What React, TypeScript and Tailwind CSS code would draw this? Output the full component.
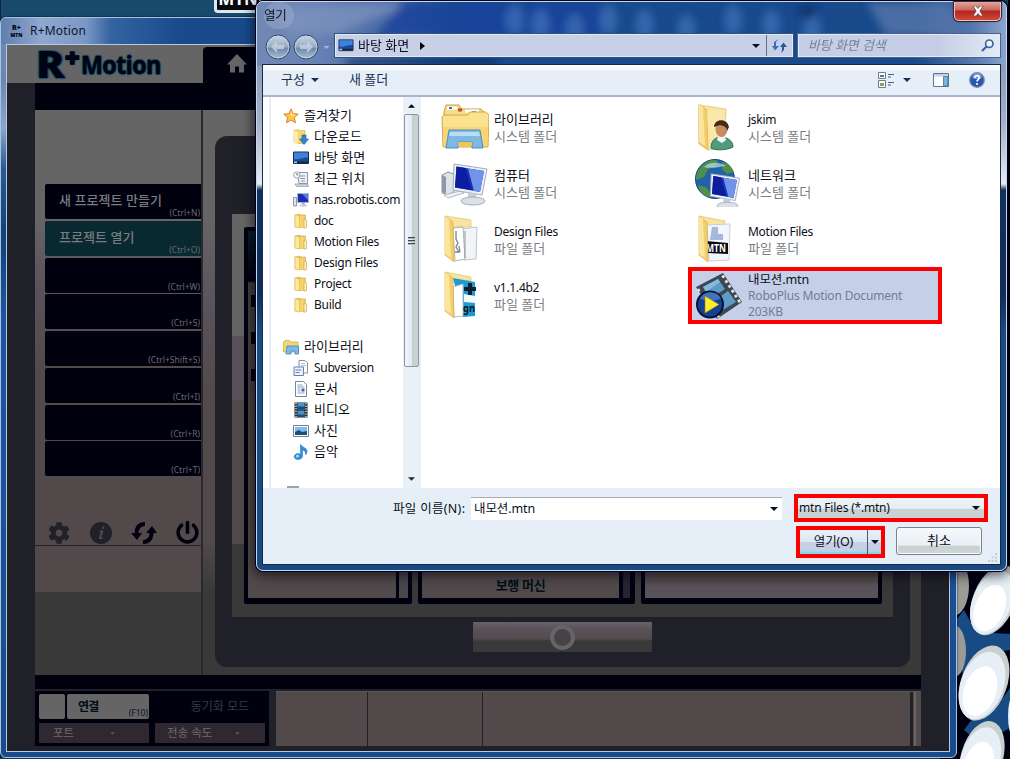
import React from 'react';
import { FaCog, FaPowerOff } from 'react-icons/fa';

type P = { className?: string };

const Caret = ({ className = '' }: P) => (
  <svg viewBox="0 0 8 4" className={`h-1 w-2 shrink-0 ${className}`} fill="currentColor">
    <path d="M0 0h8L4 4z" />
  </svg>
);

/* ---------- small navigation icons ---------- */

const SmallFolder = () => (
  <svg viewBox="0 0 16 16" className="h-4 w-4 shrink-0">
    <path d="M2 2l5-1 1 1h4.5v12.5H6L2 14z" fill="#e8c560" stroke="#d0ac48" strokeWidth=".6" />
    <path d="M2 1.700l4.500 1.600v12L2 13.600z" fill="#ffe898" stroke="#d8b04c" strokeWidth=".5" />
    <path d="M7 3h4.500v11.500H7z" fill="#f5d470" />
    <path d="M11 6l2.500 1v7.500l-2.500.8z" fill="#fff0b8" stroke="#c8a040" strokeWidth=".6" />
  </svg>
);
const Star = () => (
  <svg viewBox="0 0 16 16" className="h-4 w-4 shrink-0">
    <path d="M8 .8l2.1 4.9 5.2.4-4 3.5 1.2 5.2L8 12.1l-4.6 2.7 1.3-5.2-4-3.5 5.2-.4z" fill="#ffc34f" stroke="#e2842e" />
    <path d="M8 3l1.3 3.6 3.4.3L8 8z" fill="#fff0ab" />
  </svg>
);
const Download = () => (
  <svg viewBox="0 0 16 16" className="h-4 w-4 shrink-0">
    <path d="M1 1.5l5-1 1 1h5v13H5l-4-1z" fill="#f4d675" stroke="#d8b04c" strokeWidth=".6" />
    <path d="M1 1.7l4 1.5v12l-4-1.7z" fill="#ffebac" />
    <path d="M9 6h4v4h2.5L11 15.5 6.5 10H9z" fill="#2f86d0" stroke="#1b5c9c" strokeWidth=".6" />
  </svg>
);
const Desktop = ({ className = 'h-4 w-4' }: P) => (
  <svg viewBox="0 0 16 16" className={`shrink-0 ${className}`}>
    <path d="M.5 2h15v11.5H.5z" fill="#1b4b98" stroke="#1a2a52" />
    <path d="M1 2.5h14v5C10 7 6 10 1 9z" fill="#3d84d8" />
    <path d="M1 11.5h14v1.6H1z" fill="#1b2534" />
    <path d="M1 11.5h3v1.6H1z" fill="#9fd2e6" />
  </svg>
);
const Recent = () => (
  <svg viewBox="0 0 16 16" className="h-4 w-4 shrink-0">
    <path d="M4 1.5h10.5v11H6z" fill="#eef2f7" stroke="#8a94a5" />
    <path d="M7 5h5M7 7.5h5M8 10h4" stroke="#8795ab" />
    <circle cx="3.8" cy="4" r="3.2" fill="#f5f7fa" stroke="#8a94a5" strokeWidth=".8" />
    <path d="M3.8 2v2h1.6" stroke="#5b6880" strokeWidth=".8" fill="none" />
    <path d="M2 13h12.5l1 2.4H3.5z" fill="#d4dae3" stroke="#8a94a5" strokeWidth=".7" />
  </svg>
);
const NasPc = () => (
  <svg viewBox="0 0 16 16" className="h-4 w-4 shrink-0">
    <path d="M.5 5.5h3V14h-3z" fill="#e1e4ea" stroke="#7d8798" strokeWidth=".8" />
    <path d="M4.5 1.5h11v9h-11z" fill="#1c2fb4" stroke="#a9b3c5" />
    <path d="M9 2h6v6z" fill="#5b78e8" />
    <path d="M9 10.5h2.5l.5 2H8.5z" fill="#9aa4b4" />
    <ellipse cx="10.2" cy="13.6" rx="4" ry="1.1" fill="#c4cbd6" />
  </svg>
);
const SmallLibrary = () => (
  <svg viewBox="0 0 16 16" className="h-4 w-4 shrink-0">
    <path d="M.5 3L2 1.5h4.5L8 3h7v10H.5z" fill="#f4d675" stroke="#d2ac4a" strokeWidth=".8" />
    <path d="M4 7h11.5v8H12v-3H8v3H3z" fill="#79b9e6" stroke="#3f86c0" strokeWidth=".8" />
  </svg>
);
const Subversion = () => (
  <svg viewBox="0 0 16 16" className="h-4 w-4 shrink-0">
    <path d="M6 .5h6L14.5 3v10H6z" fill="#fff" stroke="#8393ad" />
    <path d="M8 3.5h4M8 5.5h5" stroke="#b3bfd0" />
    <path d="M1 7h9.5v8.5H1z" fill="#edf2fb" stroke="#6880ae" />
    <path d="M2.5 10h6M2.5 12.5h4" stroke="#6880ae" strokeWidth="1.2" />
  </svg>
);
const DocIcon = () => (
  <svg viewBox="0 0 16 16" className="h-4 w-4 shrink-0">
    <path d="M2.5.5h8l3 3v12h-11z" fill="#fff" stroke="#76879c" />
    <path d="M4.500 4h5M4.500 6h7M4.500 8h3M4.500 10h3M4.500 12h7" stroke="#8ba2bf" />
    <path d="M8.5 7.5h3v3h-3z" fill="#3b66a8" />
  </svg>
);
const Video = () => (
  <svg viewBox="0 0 16 16" className="h-4 w-4 shrink-0">
    <path d="M1.5.5h13v15h-13z" fill="#1c2430" />
    <path d="M4.5 1h7v6.6h-7zM4.5 8.6h7V15h-7z" fill="#4992cb" />
    <path d="M4.5 5c3-2 4 1 7-1v3.6h-7zM4.5 13c3-2 4 1 7-1v3h-7z" fill="#1d4f78" />
    <path d="M3 1v14M13 1v14" stroke="#dfe5ec" strokeWidth="1.4" strokeDasharray="1.3 1.3" />
  </svg>
);
const Photo = () => (
  <svg viewBox="0 0 16 16" className="h-4 w-4 shrink-0">
    <path d="M.5 2.5h15v11H.5z" fill="#fff" stroke="#6f7f93" />
    <path d="M2 4h12v8H2z" fill="#7cbdf0" />
    <path d="M2 9l4-2 3 2 5-1v4H2z" fill="#1f4c79" />
  </svg>
);
const Music = () => (
  <svg viewBox="0 0 16 16" className="h-4 w-4 shrink-0">
    <path d="M7.500.300c1 3 6 3.200 6.500 6.500.2 1.700-.5 3-1.500 4C13 8 11.500 6.500 9.500 6v6c0 2-2 3.500-4.500 3.500S1.200 14.200 1.200 12.600 3 9.600 5 9.600c1 0 1.800.3 2.500.7z" fill="#2b93dc" stroke="#1769ae" strokeWidth=".5" />
    <circle cx="4.500" cy="12.200" r="1.400" fill="#a6dcff" />
  </svg>
);

/* ---------- 48px file icons ---------- */

const BigLibrary = () => (
  <svg viewBox="0 0 48 48" className="h-12 w-12 shrink-0">
    <path d="M3 9L5 2h13l2 4h20l3 3v10H3z" fill="#f7dd8a" stroke="#c9a03c" />
    <path d="M6 5h10M24 8h14" stroke="#fff" strokeWidth="3" />
    <path d="M8 5h3" stroke="#3878b8" strokeWidth="2" />
    <path d="M17 7h4" stroke="#cc4a2c" strokeWidth="3" />
    <path d="M31 9.500h4" stroke="#3878b8" strokeWidth="2.500" />
    <path d="M1 14l2-2h24l2-3h16l3 3-1 32H2z" fill="#fbe28e" stroke="#d2a844" />
    <path d="M2 24h45l-1 19H3z" fill="#f6d572" />
    <path d="M8 27h31l3 18H31v-6H17v6H5z" fill="#7fb8e2" stroke="#4a8dc4" />
    <path d="M9 29h29l1 4H8z" fill="#b8ddf5" />
    <path d="M17 39h14v4H17z" fill="#f0c552" />
  </svg>
);
const Monitor = () => (
  <g>
    <path d="M13 1l33 5-5 26-29-5z" fill="#eef1f5" stroke="#a2abb8" />
    <path d="M15.500 3.500L43 8l-4 21-25-4.500z" fill="#1835b8" />
    <path d="M27 5.500L43 8l-4 21-6-1z" fill="#6f94ea" />
    <path d="M15.500 3.500l9 1.500 6 22-16.500-2.500z" fill="#0d1da0" />
    <path d="M27 29l8 2 1 6-9-1z" fill="#c7cdd6" />
    <ellipse cx="32" cy="38" rx="12" ry="4" fill="#dce1e8" stroke="#a4adba" />
  </g>
);
const Computer = () => (
  <svg viewBox="0 0 48 48" className="h-12 w-12 shrink-0">
    <g transform="translate(0 4)">
      <path d="M1 12l6-3 6 2v18l-7 3-5-2z" fill="#dfe3e9" stroke="#8c96a5" />
      <path d="M1 12l4 2v17l-4-2z" fill="#8d97a5" />
      <path d="M3 32l16-4 4 2-16 5z" fill="#eef0f4" stroke="#b6bdc8" />
      <Monitor />
    </g>
  </svg>
);
const Network = () => (
  <svg viewBox="0 0 48 48" className="h-12 w-12 shrink-0">
    <circle cx="20" cy="20" r="19.500" fill="#2262a8" stroke="#174478" />
    <path d="M5 9c6-8 14-9 18-7l-2 6-8 2-4 8-8 3c0-5 1-9 4-12zM27 3c6 1 10 5 12 10l-7 2-5-5zM3 26l8 2 6 8-3 3C8 36 4 32 3 26z" fill="#4f8f4c" />
    <path d="M9 8c5-5 14-6 22-1-8 1-16 3-22 1z" fill="#c4e4f4" opacity=".65" />
    <g transform="translate(5 14) scale(.86)"><Monitor /></g>
  </svg>
);
const FolderFront = () => (
  <g>
    <path d="M4 1l8 6 1 40-9-7z" fill="#f2cd6a" stroke="#d9b24c" strokeWidth=".7" />
    <path d="M4 1l4 3 2 39-6-4z" fill="#fbe59c" />
  </g>
);
const UserFolder = () => (
  <svg viewBox="0 0 48 48" className="h-12 w-12 shrink-0">
    <path d="M4 2l27 4v6l-5 34-13 1-9-6z" fill="#f8e3a0" stroke="#e0c069" strokeWidth=".7" />
    <FolderFront />
    <path d="M12 8l16-1 2 8-3 28-13 3z" fill="#fbe8a9" />
    <path d="M16 45c0-8 5-11 10-11s12 3 12 10c-6 3-16 4-22 1z" fill="#4e9c7c" stroke="#2f6e56" />
    <path d="M23 33h7l1 4-4 3-5-3z" fill="#f4f5f2" />
    <ellipse cx="26.500" cy="26" rx="6" ry="8" fill="#c68d62" />
    <path d="M19 24c0-8 13-10 15 0l-2 4c0-4-3-5-7-6z" fill="#47291c" />
  </svg>
);
const DocsFolder = () => (
  <svg viewBox="0 0 48 48" className="h-12 w-12 shrink-0">
    <path d="M4 1l26 4v7H10z" fill="#f8e3a0" stroke="#e0c069" strokeWidth=".7" />
    <path d="M21 14l15-2-1 32-12 1z" fill="#f2f4f6" stroke="#bdc5cd" />
    <path d="M12 13l10-1 2 32-10 2z" fill="#fff" stroke="#aeb7c0" />
    <path d="M15 16v8l2 4-2 4 3 5h-4M18 31l1 6" stroke="#77838e" strokeWidth="1.300" fill="none" />
    <path d="M24 16v27" stroke="#8d969e" />
    <FolderFront />
  </svg>
);
const MtnFolder = () => (
  <svg viewBox="0 0 48 48" className="h-12 w-12 shrink-0">
    <path d="M4 1l26 5v8H10z" fill="#f8e3a0" stroke="#e0c069" strokeWidth=".7" />
    <path d="M12 10l23-1-1 36-20 1z" fill="#f2f5fa" stroke="#c8d0dc" />
    <path d="M17 12h6v7h5v6H15z" fill="#a5b8d8" />
    <path d="M11 26l22 2v11l-21-1z" fill="#090a12" />
    <text x="11" y="37" fontSize="11" fontWeight="700" fill="#fff" textLength="20" lengthAdjust="spacingAndGlyphs">MTN</text>
    <FolderFront />
  </svg>
);
const VersionFolder = () => (
  <svg viewBox="0 0 48 48" className="h-12 w-12 shrink-0">
    <path d="M4 1l26 5v4H10z" fill="#f8e3a0" stroke="#e0c069" strokeWidth=".7" />
    <path d="M12 7l22 4v34l-12 1z" fill="#1d9bd0" />
    <path d="M12 16l10-3v32l-9 1z" fill="#fff" stroke="#b3c0ca" />
    <path d="M23 23l11 2v7l-11-1z" fill="#f4f9fc" />
    <path d="M27 12h4v4h4v4h-4v4h-4v-4h-4v-4h4z" fill="#0c1f30" />
    <text x="22" y="41" fontSize="11" fontWeight="700" fill="#06131f" textLength="12" lengthAdjust="spacingAndGlyphs">gn</text>
    <FolderFront />
  </svg>
);
const MotionFile = () => (
  <svg viewBox="0 0 48 48" className="h-12 w-12 shrink-0">
    <path d="M1 15L28 1l19 29-25 17z" fill="#3f4750" />
    <path d="M8 15l15-8 7 10-14 9zM19 29l14-10 8 11-15 9z" fill="#5f9bc8" />
    <path d="M8 15l15-8 2 3-14 10z" fill="#83bbdf" />
    <path d="M27.500 3.500L45 30.500" stroke="#dfe7ee" strokeWidth="2.800" strokeDasharray="2.800 3" />
    <path d="M3 17l6 10M22 45l3-2" stroke="#dfe7ee" strokeWidth="2.500" strokeDasharray="2.800 3" />
    <circle cx="15" cy="32.500" r="13" fill="#173f94" stroke="#0a1430" strokeWidth="2" />
    <path d="M5 26.500a12 12 0 0121 0c-7 3-14 3-21 0z" fill="#4272c2" />
    <path d="M10 24l14 8.500L10 41z" fill="#ffee28" stroke="#9c8c12" strokeWidth=".6" />
  </svg>
);

/* ---------- data ---------- */

const shortcuts = [
  ['새 프로젝트 만들기', '(Ctrl+N)'],
  ['프로젝트 열기', '(Ctrl+O)'],
  ['', '(Ctrl+W)'],
  ['', '(Ctrl+S)'],
  ['', '(Ctrl+Shift+S)'],
  ['', '(Ctrl+I)'],
  ['', '(Ctrl+R)'],
  ['', '(Ctrl+T)'],
];

const KO = 'text-[13px] tracking-[0px]';
const EN = 'text-[12px] tracking-[-0.27px]';

const favorites: [React.FC, string, string][] = [
  [Download, '다운로드', KO],
  [() => <Desktop />, '바탕 화면', KO],
  [Recent, '최근 위치', KO],
  [NasPc, 'nas.robotis.com', EN],
  [SmallFolder, 'doc', EN],
  [SmallFolder, 'Motion Files', EN],
  [SmallFolder, 'Design Files', EN],
  [SmallFolder, 'Project', EN],
  [SmallFolder, 'Build', EN],
];
const libraries: [React.FC, string, string][] = [
  [Subversion, 'Subversion', EN],
  [DocIcon, '문서', KO],
  [Video, '비디오', KO],
  [Photo, '사진', KO],
  [Music, '음악', KO],
];
const files: [React.FC, string, string, string][] = [
  [BigLibrary, '라이브러리', '시스템 폴더', KO],
  [UserFolder, 'jskim', '시스템 폴더', EN],
  [Computer, '컴퓨터', '시스템 폴더', KO],
  [Network, '네트워크', '시스템 폴더', KO],
  [DocsFolder, 'Design Files', '파일 폴더', EN],
  [MtnFolder, 'Motion Files', '파일 폴더', EN],
  [VersionFolder, 'v1.1.4b2', '파일 폴더', EN],
];

const NavRow = ({ icon: Icon, text, cls }: { icon: React.FC; text: string; cls: string }) => (
  <div className="flex h-[21px] items-center gap-[5px] pl-[30px]">
    <Icon />
    <span className={cls}>{text}</span>
  </div>
);

/* ---------- desktop ---------- */

const Pebble = ({ cx, cy, rx, ry, a }: { cx: number; cy: number; rx: number; ry: number; a: number }) => (
  <g transform={`rotate(${a} ${cx} ${cy})`}>
    <ellipse cx={cx} cy={cy} rx={rx} ry={ry} fill="#c9cfce" />
    <ellipse cx={cx - 1} cy={cy + 3} rx={rx * 0.93} ry={ry * 0.9} fill="#e6eff5" />
    <ellipse cx={cx - 1} cy={cy + 9} rx={rx * 0.7} ry={ry * 0.66} fill="#fff" />
  </g>
);

const Wallpaper = () => (
  <svg className="absolute inset-0 h-[759px] w-[1010px]" viewBox="0 0 1010 759">
    <path d="M0 0h1010v759H0z" fill="#184a6b" />
    <path d="M0 0h1v759H0z" fill="#10244a" />
    <path d="M940 560h70v199h-70z" fill="#000010" />
    <path d="M956 620l8-10 12 22 34 2v16l-28 4-18 26-8-40zM964 730l12-16 18-4 16-22v40l-30 16z" fill="#184a84" />
    <path d="M1008 0h2v560h-2z" fill="#00000f" />
    <ellipse cx="953" cy="586" rx="16" ry="30" fill="#9c9c94" />
    <ellipse cx="954" cy="651" rx="12" ry="26" fill="#9c9c94" />
    <Pebble cx={994} cy={600} rx={21} ry={37} a={22} />
    <Pebble cx={984} cy={683} rx={23} ry={39} a={20} />
    <Pebble cx={982} cy={757} rx={21} ry={37} a={16} />
    <ellipse cx="1013" cy="716" rx="5" ry="20" fill="#e6eff5" />
  </svg>
);

const MotionWindow = () => (
  <div className="absolute left-0 top-[17px] flex h-[741px] w-[957px] flex-col rounded-[6px] border border-[#a5c5e2] bg-[linear-gradient(180deg,#6f8db5_0px,#6d86ad_60px,#8da5cc_110px,#2a5a98_150px,#104278_215px,#1f55a0_300px,#184a8c_100%)] pb-[5px] pl-[5px] pr-[6px] shadow-[0_0_2px_#000018]">
    <div className="-ml-[5px] -mr-[6px] flex h-[26px] shrink-0 items-center gap-[7px] rounded-t-[5px] bg-[linear-gradient(90deg,#5f7eae_0px,#91a8cf_40px,#7b97c5_85px,#3463a0_110px,#184a8c_180px,#184a8c_300px)] pl-[9px]">
      <div className="flex h-[14px] w-[13px] flex-col items-center justify-between overflow-visible font-black text-[#000010]">
        <span className="text-[7px] leading-[8px]">R+</span>
        <span className="text-[5px] leading-[6px]">MTN</span>
      </div>
      <span className="text-[12px] leading-4 tracking-[0.2px] text-[#0c1630]">R+Motion</span>
    </div>
    <div className="flex min-h-0 flex-1 flex-col border border-[#b5c9e2] bg-[#202028]">
      <div className="flex h-[38px] shrink-0 bg-[#656565]">
        <div className="flex w-[196px] items-center pl-[29px] text-[#000412] [text-shadow:-1px_0_1px_#18506f,1px_0_1px_#18506f,0_1px_1px_#18506f,0_-1px_1px_#18506f]">
          <span className="w-[29px] origin-left scale-x-[1.15] text-[37px] font-black leading-[36px]">R</span>
          <span className="-mt-[14px] w-[16px] text-[25px] font-black leading-[24px] [-webkit-text-stroke:1.5px_#000412]">+</span>
          <span className="origin-left scale-x-[0.93] text-[25px] font-bold leading-[36px] tracking-[-0.6px] [-webkit-text-stroke:0.5px_#000412]">Motion</span>
        </div>
        <div className="mt-[2px] flex-1 rounded-tl-[4px] bg-[#00000f] pl-[22px] pt-[5px]">
          <svg viewBox="0 0 24 24" className="h-6 w-6" fill="#656565"><path d="M10 20.500v-6h4v6h5v-8h3L12 2 2 12.500h3v8z" /></svg>
        </div>
      </div>
      <div className="flex min-h-0 flex-1 flex-col pl-[28px]">
        <div className="h-[27px] shrink-0 bg-[#00000f]" />
        <div className="flex h-[565px] w-[886px] shrink-0">
          <div className="flex w-[168px] flex-col border-r-2 border-[#2a2830] bg-[linear-gradient(180deg,#656565_0px,#656565_110px,#5a525a_180px,#524a4a_260px,#524a4a_482px,#393939_482px)] pl-[10px] pt-[74px]">
            <div className="flex flex-col gap-[1.75px]">
              {shortcuts.map(([label, key], i) => (
                <div key={key} className={`flex h-[35px] shrink-0 flex-col justify-between rounded-l-[2px] pr-[1px] ${i === 1 ? 'bg-[#08292f]' : 'bg-[#00000f]'}`}>
                  <span className="h-[22px] pl-[14px] pt-[6px] text-[13px] font-medium leading-[20px] tracking-[0.05px] text-[#7b7b80]">{label}</span>
                  <span className="self-end text-[8.5px] leading-[13px] text-[#6a6a6e]">{key}</span>
                </div>
              ))}
            </div>
            <div className="-ml-[10px] mt-[35px] flex h-[35px] items-center justify-between border-b border-[#202028] pb-[2px] pl-[13px] pr-[2px] pt-[11px]">
              <FaCog className="h-[22px] w-[22px] text-[#202028]" />
              <svg viewBox="0 0 24 24" className="h-6 w-6"><circle cx="12" cy="12" r="11" fill="#202028" /><path d="M13.500 5.500l2 0-.6 2.200h-2zM11 9.500h3.500l-2.200 7h1.600l-.4 1.500H9.600l2.200-7h-1.200z" fill="#524a4a" /></svg>
              <svg viewBox="0 0 26 24" className="h-6 w-[26px]"><g fill="none" stroke="#00000f" strokeWidth="4"><path d="M14 3C8 3 5.500 7 5.500 13M12 21c6 0 8.500-4 8.500-10" /></g><path d="M0 12h11l-5 7zM15 12h11l-5-7z" fill="#00000f" /></svg>
              <FaPowerOff className="h-[23px] w-[23px] text-[#00000f]" />
            </div>
          </div>
          <div className="flex flex-1 bg-[linear-gradient(180deg,#656565_0px,#656565_110px,#5a525a_200px,#524a4a_280px,#524a4a_430px,#393939_482px)] pb-[8px] pl-[12px] pr-[11px] pt-[26px]">
            <div className="flex flex-1 flex-col items-center rounded-[12px] bg-[#202028] px-[17px] pt-[78px]">
              <div className="flex h-[403px] w-full justify-start gap-[6px] bg-[linear-gradient(180deg,#656565_0px,#656565_122px,#5a525a_122px,#5a525a_186px,#524a4a_186px,#524a4a_330px,#393939_330px)] pl-[12px] pt-[13px]">
                <div className="flex h-[377px] w-[168px] rounded-[2px] bg-[#00000f] pb-[6px] pl-[4px] pr-[4px] pt-[4px]">
                  <div className="w-[148px] bg-[linear-gradient(180deg,#082028_0px,#00000f_50px,#453f3c_52px,#524a4a_100%)]">
                    <div className="flex flex-col gap-[25px] pt-[64px]">
                      {[0, 1, 2].map((n) => <div key={n} className="ml-[3px] h-[12px] w-3 bg-[#00000f]" />)}
                    </div>
                  </div>
                  <div className="ml-[3px] w-[9px] bg-[#4a464c]" />
                </div>
                <div className="flex h-[377px] w-[217px] rounded-[2px] bg-[#00000f] pb-[6px] pl-[4px] pt-[4px]">
                  <div className="flex w-[197px] items-end justify-center bg-[#524a4a] pb-[3px] text-[13px] font-bold leading-5 tracking-[-0.3px] text-[#00101a]">보행 머신</div>
                  <div className="ml-[4px] w-[7px] bg-[#252430]" />
                </div>
                <div className="h-[377px] w-[241px] rounded-[2px] bg-[#00000f] px-[4px] pb-[6px] pt-[4px]">
                  <div className="h-full bg-[linear-gradient(180deg,#524a4a_350px,#5a525a_355px)]" />
                </div>
              </div>
              <div className="mt-[5px] flex h-[30px] w-[179px] items-center justify-center bg-[linear-gradient(180deg,#656565_0px,#5a525a_7px,#524a4a_17px,#393939_19px)]">
                <div className="h-[25px] w-[25px] rounded-full border-4 border-[#656569] bg-[#484244]" />
              </div>
            </div>
          </div>
        </div>
        <div className="h-[14px] w-[886px] shrink-0 bg-[#00000f]" />
        <div className="mt-[2px] flex h-[55px] w-[886px] shrink-0">
          <div className="w-[234px] bg-[#00000f] px-[4px] pt-[3px]">
            <div className="flex h-[25px] gap-[2px]">
              <div className="w-[26px] rounded-[2px] bg-[#656565]" />
              <div className="flex w-[82px] items-center justify-between rounded-[2px] bg-[#656565] pl-[11px] pr-[1px]">
                <span className="text-[12px] font-bold leading-4 tracking-[-0.8px] text-[#000c18]">연결</span>
                <span className="mt-[13px] text-[8.5px] leading-3 text-[#10101c]">(F10)</span>
              </div>
              <span className="flex-1 pr-[16px] text-right text-[12px] leading-[25px] text-[#393940]">동기화 모드</span>
            </div>
            <div className="mt-[4px] flex h-5 gap-[6px] text-[11.500px] leading-5 text-[#706a6e]">
              <div className="flex w-[110px] items-center bg-[#302830] pl-[14px]"><span className="w-[57px]">포트</span><Caret className="h-[3px] w-[5px] text-[#5a525a]" /></div>
              <div className="flex w-[110px] items-center bg-[#302830] pl-[12px]"><span className="w-[68px]">전송 속도</span><Caret className="h-[3px] w-[5px] text-[#5a525a]" /></div>
            </div>
          </div>
          <div className="ml-[7px] flex flex-1 divide-x divide-[#202028] border-t border-[#5a525a] bg-[#524a4a]">
            <div className="w-[92px]" />
            <div className="w-[115px]" />
            <div className="flex-1" />
            <div className="w-[10px] border-l-2! border-[#202028]"><div className="ml-px h-full w-[2px] bg-[#656565]" /></div>
          </div>
        </div>
      </div>
    </div>
  </div>
);

const GlassLight = () => (
  <svg className="absolute inset-0 h-[64px] w-[749px] rounded-t-[6px]" viewBox="0 0 750 64" preserveAspectRatio="none">
    <defs>
      <linearGradient id="glass"><stop offset="0" stopColor="#7389b4" /><stop offset=".08" stopColor="#6882b5" /><stop offset=".2" stopColor="#3a619f" /><stop offset=".27" stopColor="#184a8c" /><stop offset=".88" stopColor="#184a8c" /><stop offset=".96" stopColor="#5a7ab0" /><stop offset="1" stopColor="#8ca5cd" /></linearGradient>
      <filter id="soft" x="-50%" y="-50%" width="200%" height="200%"><feGaussianBlur stdDeviation="4" /></filter>
    </defs>
    <path d="M0 0h750v64H0z" fill="url(#glass)" />
    <g filter="url(#soft)">
      <path d="M25 6l100-6h35L80 32H30z" fill="#7f94bf" opacity=".7" />
      <path d="M145 0h200v34H140l-30 14z" fill="#1c429c" opacity=".8" />
      {[258, 284, 318, 352, 388, 430, 477, 515, 556].map((x, i) => (
        <ellipse key={x} cx={x} cy={18 + (i % 3) * 5} rx={9} ry={16} fill="#3c70b8" opacity=".75" />
      ))}
      <path d="M540 5h22l-9 14z" fill="#102e66" />
      <path d="M610 0h80l20 34h-80z" fill="#5676aa" opacity=".8" />
      <path d="M90 58h150v6H90z" fill="#102e62" />
    </g>
  </svg>
);

const RoundNav = ({ flip = false }: { flip?: boolean }) => (
  <svg viewBox="0 0 26 26" className={`h-[26px] w-[26px] ${flip ? '-scale-x-100' : ''}`}>
    <defs><linearGradient id="navbtn" x2="0" y2="1"><stop stopColor="#c9d7e6" /><stop offset=".48" stopColor="#9aadc5" /><stop offset=".56" stopColor="#7089a8" /><stop offset="1" stopColor="#a9bfd4" /></linearGradient></defs>
    <circle cx="13" cy="13" r="12" fill="url(#navbtn)" stroke="#34486c" />
    <circle cx="13" cy="13" r="10.800" fill="none" stroke="#c6d5e5" strokeWidth=".8" />
    <path d="M6 13l6-6v4h7v4h-7v4z" fill="#c8d5e4" opacity=".75" />
  </svg>
);

const OpenDialog = () => (
  <div className="absolute left-[256px] top-[1px] h-[570px] w-[751px] rounded-[7px] border border-[#c5d8ee] bg-[linear-gradient(180deg,#7b8fb8_0px,#8c9cb8_60px,#a5b0c8_120px,#e6ebf2_182px,#10315f_188px,#102c58_290px,#184a84_330px,#184a84_100%)] shadow-[0_0_0_1px_#000018,0_2px_12px_3px_rgba(0,0,15,.6)]">
    <GlassLight />
    <div className="relative flex h-full flex-col px-[5px] pb-[5px]">
      <div className="flex h-[32px] shrink-0 items-start justify-between pl-[2px]">
        <span className="rounded-full bg-[#a5b3cf]/40 pr-2 text-[12.5px] leading-[27px] tracking-[-0.3px] text-[#08101f]">열기</span>
        <div className="flex h-[19px] w-[47px] items-center justify-center rounded-b-[5px] border border-t-0 border-[#e9c3c0] bg-[linear-gradient(180deg,#dda79e_0%,#cb6458_45%,#b02520_50%,#cf4a35_100%)] shadow-[0_0_1px_1px_#3a1620]">
          <svg viewBox="0 0 12 10" className="h-[10px] w-3"><path d="M1 0h3l2 2.500L8 0h3L7.800 5 11 10H8L6 7.500 4 10H1l3.200-5z" fill="#fff" stroke="#5a3b45" strokeWidth=".7" /></svg>
        </div>
      </div>
      <div className="flex h-[30px] shrink-0 items-start pl-[3px]">
        <div className="flex items-center gap-[2px]"><RoundNav /><RoundNav flip /><Caret className="ml-[2px] h-[3px] w-[7px] text-[#a5b8d5]" /></div>
        <div className="ml-[5px] flex h-[23px] w-[458px] items-center border border-[#e3eaf5] bg-[#c8d0e8] text-[#0a0f1a] shadow-[0_0_0_1px_#32517f]">
          <Desktop className="ml-[2px] h-[15px] w-4" />
          <span className={`ml-[4px] ${KO}`}>바탕 화면</span>
          <svg viewBox="0 0 5 8" className="ml-[11px] h-2 w-[5px]"><path d="M0 0l5 4-5 4z" /></svg>
          <Caret className="ml-auto mr-[6px] text-[#0a0f1a]" />
          <div className="flex h-full w-[26px] items-center justify-center border-l border-[#5f7090]">
            <svg viewBox="0 0 16 14" className="h-[14px] w-4"><path d="M7 0L4 3v4h3l-4 4.500L0 7h2V3z" fill="#3c6fb8" /><path d="M9 14l3-3V8h3l-3.500-4.500L8 8h2v3z" fill="#28589f" /></svg>
          </div>
        </div>
        <div className="ml-[5px] flex h-[23px] w-[202px] items-center justify-between border border-[#e3eaf5] bg-[linear-gradient(90deg,#c5cee6_70%,#e2ebf5)] pl-[9px] pr-[5px] shadow-[0_0_0_1px_#456492]">
          <span className="text-[13px] italic tracking-[-0.1px] text-[#75809a]">바탕 화면 검색</span>
          <svg viewBox="0 0 13 13" className="h-[13px] w-[13px]" fill="none" stroke="#3f63a0"><circle cx="8.300" cy="4.700" r="3.700" strokeWidth="1.700" fill="#e9f2fa" /><path d="M5.500 7.500L1 12" strokeWidth="2.300" /></svg>
        </div>
      </div>
      <div className="flex min-h-0 flex-1 flex-col border border-[#152a4c] bg-[#e6eff7] text-[#0b0f18]">
        <div className="flex h-[32px] shrink-0 items-center border-b-2 border-[#a5b5cd] bg-[linear-gradient(180deg,#fbfdff_0px,#f5f9fc_5px,#e6eff7_6px)] pl-[18px] pr-[15px] text-[#1c2f50]">
          <span className={KO}>구성</span>
          <Caret className="ml-[6px] text-[#1c2f50]" />
          <span className={`ml-[30px] ${KO}`}>새 폴더</span>
          <svg viewBox="0 0 17 16" className="ml-auto h-4 w-[17px]"><path d="M.5.500h7v6h-7zM.5 8.500h7v7h-7z" fill="#fff" stroke="#6b7a90" /><path d="M2 3h4v2H2z" fill="#457a9a" /><path d="M2 11h4v3H2z" fill="#8ba048" /><path d="M10 2.500h6M10 5h3M10 10.500h6M10 13h3" stroke="#4e5f7a" /></svg>
          <Caret className="ml-[8px] text-[#1c2f50]" />
          <svg viewBox="0 0 16 14" className="ml-[22px] h-[14px] w-4"><path d="M.5.500h15v13H.5z" fill="#fff" stroke="#5f7590" /><path d="M1 1h14v2.500H1z" fill="#c5d3e3" /><path d="M10.500 3.500H15V13h-4.500z" fill="#78b4dc" stroke="#456e98" strokeWidth=".8" /></svg>
          <svg viewBox="0 0 16 16" className="ml-[20px] h-4 w-4"><circle cx="8" cy="8" r="7.300" fill="#2c55ad" stroke="#7d8ca8" strokeWidth="1.300" /><path d="M3 6a5 5 0 0110 0c-3 1.500-7 1.500-10 0z" fill="#6f96d8" /><path d="M5.800 6c0-3.200 4.600-3.200 4.600-.4C10.400 7.500 8 7.600 8 9.500" stroke="#fff" strokeWidth="1.700" fill="none" /><circle cx="8" cy="12" r="1.100" fill="#fff" /></svg>
        </div>
        <div className="flex h-[391px] shrink-0 bg-white">
          <div className="flex w-[158px] shrink-0 border-r-2 border-[#e6eff7]">
            <div className="w-[8px] border-r-2 border-[#e6eff7]" />
            <div className="-ml-[8px] flex w-[140px] flex-col overflow-hidden whitespace-nowrap pt-[8px]">
              <div className="flex h-[21px] items-center gap-[5px] pl-[20px]"><Star /><span className={KO}>즐겨찾기</span></div>
              {favorites.map(([I, t, c]) => <NavRow key={t} icon={I} text={t} cls={c} />)}
              <div className="mt-[21px] flex h-[21px] items-center gap-[5px] pl-[20px]"><SmallLibrary /><span className={KO}>라이브러리</span></div>
              {libraries.map(([I, t, c]) => <NavRow key={t} icon={I} text={t} cls={c} />)}
              <div className="ml-[24px] mt-[24px] h-[2px] w-[12px] bg-[#9ca5ad]" />
            </div>
            <div className="flex w-[16px] flex-col items-center bg-[#e9f1f8] text-[#202833]">
              <svg viewBox="0 0 8 4" className="mt-[7px] h-1 w-[7px]"><path d="M0 4h8L4 0z" /></svg>
              <div className="mt-[6px] flex h-[253px] w-[15px] flex-col items-center justify-center gap-[2px] rounded-[2px] border border-[#8c979f] bg-[linear-gradient(90deg,#f2f6fa_0%,#e2ebf2_50%,#c6cfd0_52%,#cbd3d5_100%)]">
                {[0, 1, 2].map((n) => <div key={n} className="h-px w-[7px] bg-[#3c4650] shadow-[0_1px_0_#aeb8c0]" />)}
              </div>
              <Caret className="mb-[7px] mt-auto h-1 w-[7px]" />
            </div>
          </div>
          <div className="grid h-fit shrink-0 grid-cols-[254px_254px] pl-[13px] pt-[2px]">
            {files.map(([I, name, kind, c]) => (
              <div key={name} className="flex h-[56px] items-center gap-[5px] pl-[7px]">
                <I />
                <div className="flex flex-col">
                  <span className={`leading-[17px] ${c}`}>{name}</span>
                  <span className="text-[13px] leading-[16px] text-[#7b7f84]">{kind}</span>
                </div>
              </div>
            ))}
            <div className="flex h-[57px] items-center gap-[5px] border-4 border-[#fa0000] bg-[#c6cfe8] pl-[3px]">
              <MotionFile />
              <div className="flex flex-col whitespace-nowrap leading-4">
                <span className="text-[12.5px] tracking-[-0.1px]">내모션.mtn</span>
                <span className="text-[12px] tracking-[-0.17px] text-[#6f7d98]">RoboPlus Motion Document</span>
                <span className="text-[12px] tracking-[-0.2px] text-[#6f7d98]">203KB</span>
              </div>
            </div>
          </div>
        </div>
        <div className="flex h-[38px] shrink-0 items-start whitespace-nowrap pl-[130px] pt-[6px]">
          <span className="mt-[3px] w-[78px] text-[12.5px] leading-[24px] tracking-[0.3px]">파일 이름(N):</span>
          <div className="mt-[3px] flex h-[23px] w-[311px] items-center justify-between border-t border-[#a5adb5] bg-white pl-[3px] pr-[4px]">
            <span className="text-[12.5px] tracking-[-0.1px]">내모션.mtn</span><Caret />
          </div>
          <div className="ml-[12px] flex h-[28px] w-[194px] items-center justify-between border-4 border-[#fa0000] bg-[linear-gradient(180deg,#edf3f7_0%,#e6edf2_52%,#c9d1d2_56%)] pl-[1px] pr-[4px] text-[12px] tracking-[-0.2px]">
            <span>mtn Files (*.mtn)</span><Caret />
          </div>
        </div>
        <div className="flex items-start pl-[533px]">
          <div className="flex h-[32px] w-[89px] border-4 border-[#fa0000] bg-[linear-gradient(180deg,#e8f1f8_0%,#dde7f2_48%,#c5cfe8_52%,#c5cfe8_88%,#7bdcf0_93%)]">
            <div className="flex w-[67px] items-center justify-center text-[12.5px] tracking-[-0.2px]">열기(O)</div>
            <div className="flex flex-1 items-center justify-center border-l border-[#4c5868]"><Caret /></div>
          </div>
          <div className="ml-[11px] mt-px flex h-[28px] w-[86px] items-center justify-center rounded-[3px] border border-[#78828a] bg-[linear-gradient(180deg,#f4f7fa_0%,#e9f0f5_66%,#c8d0d0_70%,#cfd7d8_100%)] text-[13px] shadow-[inset_0_0_0_1px_#f8fafc]">취소</div>
        </div>
      </div>
    </div>
    <svg viewBox="0 0 9 9" className="absolute bottom-[8px] right-[9px] h-[9px] w-[9px]" fill="#c2ccd8"><path d="M7 0h2v2H7zM7 3.500h2v2H7zM7 7h2v2H7zM3.500 3.500h2v2h-2zM3.500 7h2v2h-2zM0 7h2v2H0z" /></svg>
  </div>
);

export default function App() {
  return (
    <div className="relative h-[759px] w-[1010px] overflow-hidden [font-family:'Noto_Sans','Noto_Sans_CJK_KR',sans-serif]">
      <Wallpaper />
      <div className="absolute left-[214px] top-[-14px] flex h-[27px] w-[48px] items-end justify-center rounded-[4px] border-[3px] border-[#dfe6ec] bg-[#080810] text-[17px] font-bold leading-[22px] text-white">MTN</div>
      <MotionWindow />
      <OpenDialog />
    </div>
  );
}
